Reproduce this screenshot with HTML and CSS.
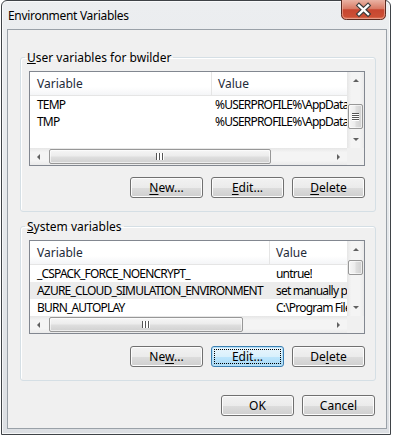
FILE: index.html
```html
<!DOCTYPE html>
<html lang="en">
<head>
    <meta charset="UTF-8">
    <title>Environment Variables</title>
    <link rel="stylesheet" href="styles.css">
</head>
<body>

<div class="window">
    <div class="titlebar">
        <span class="title">Environment Variables</span>
        <button class="close-btn" aria-label="Close">
            <svg width="45" height="20" viewBox="0 0 45 20">
                <defs>
                    <linearGradient id="closeBg" x1="0" y1="0" x2="0" y2="1">
                        <stop offset="0" stop-color="#eab3a4"/>
                        <stop offset="0.45" stop-color="#d87964"/>
                        <stop offset="0.5" stop-color="#c74630"/>
                        <stop offset="0.85" stop-color="#cc4f35"/>
                        <stop offset="1" stop-color="#e5876a"/>
                    </linearGradient>
                </defs>
                <path d="M0.5 0 V14.5 Q0.5 19.5 5.5 19.5 H39.5 Q44.5 19.5 44.5 14.5 V0" fill="url(#closeBg)" stroke="#5a2a20"/>
                <path d="M1.5 0 V14 Q1.5 18.5 6 18.5 H39 Q43.5 18.5 43.5 14 V0" fill="none" stroke="#f0b8a8" stroke-opacity="0.6"/>
                <path d="M18 5.5 L27 14 M27 5.5 L18 14" stroke="#3b3b3b" stroke-width="4.6" stroke-linecap="square"/>
                <path d="M18 5.5 L27 14 M27 5.5 L18 14" stroke="#ffffff" stroke-width="2.4" stroke-linecap="square"/>
            </svg>
        </button>
    </div>

    <div class="client">
        <!-- User variables -->
        <fieldset class="group">
            <legend><u>U</u>ser variables for bwilder</legend>
            <div class="list list-user">
                <div class="view">
                    <div class="lv-head">
                        <div class="cell c1">Variable</div>
                        <div class="cell c2">Value</div>
                    </div>
                    <div class="lv-row">
                        <div class="cell c1">TEMP</div>
                        <div class="cell c2">%USERPROFILE%\AppData\Local\Temp</div>
                    </div>
                    <div class="lv-row">
                        <div class="cell c1">TMP</div>
                        <div class="cell c2">%USERPROFILE%\AppData\Local\Temp</div>
                    </div>
                </div>
                <div class="vscroll">
                    <span class="arrow arrow-up"></span>
                    <div class="vtrack">
                        <div class="vthumb" style="margin-top:15px;height:25px"><span class="vgrip"></span></div>
                    </div>
                    <span class="arrow arrow-down"></span>
                </div>
                <div class="hscroll">
                    <span class="arrow arrow-left"></span>
                    <div class="htrack">
                        <div class="hthumb" style="width:222px"><span class="hgrip"></span></div>
                    </div>
                    <span class="arrow arrow-right"></span>
                </div>
                <div class="corner"></div>
            </div>
            <div class="btn-row">
                <button class="btn"><u>N</u>ew...</button>
                <button class="btn"><u>E</u>dit...</button>
                <button class="btn"><u>D</u>elete</button>
            </div>
        </fieldset>

        <!-- System variables -->
        <fieldset class="group group-system">
            <legend><u>S</u>ystem variables</legend>
            <div class="list list-system">
                <div class="view">
                    <div class="lv-head">
                        <div class="cell c1">Variable</div>
                        <div class="cell c2">Value</div>
                    </div>
                    <div class="lv-row">
                        <div class="cell c1">_CSPACK_FORCE_NOENCRYPT_</div>
                        <div class="cell c2">untrue!</div>
                    </div>
                    <div class="lv-row selected">
                        <div class="cell c1">AZURE_CLOUD_SIMULATION_ENVIRONMENT</div>
                        <div class="cell c2">set manually per machine</div>
                    </div>
                    <div class="lv-row">
                        <div class="cell c1">BURN_AUTOPLAY</div>
                        <div class="cell c2">C:\Program Files\Burn</div>
                    </div>
                </div>
                <div class="vscroll">
                    <span class="arrow arrow-up"></span>
                    <div class="vtrack">
                        <div class="vthumb" style="margin-top:2px;height:15px"></div>
                    </div>
                    <span class="arrow arrow-down"></span>
                </div>
                <div class="hscroll">
                    <span class="arrow arrow-left"></span>
                    <div class="htrack">
                        <div class="hthumb" style="width:194px"><span class="hgrip"></span></div>
                    </div>
                    <span class="arrow arrow-right"></span>
                </div>
                <div class="corner"></div>
            </div>
            <div class="btn-row">
                <button class="btn">Ne<u>w</u>...</button>
                <button class="btn btn-default">Ed<u>i</u>t...</button>
                <button class="btn">De<u>l</u>ete</button>
            </div>
        </fieldset>

        <div class="btn-row footer">
            <button class="btn">OK</button>
            <button class="btn">Cancel</button>
        </div>
    </div>
</div>

</body>
</html>
```

FILE: styles.css
```css
* {
    box-sizing: border-box;
}
body {
    margin: 0;
    background-color: #ffffff;
    font-family: "Noto Sans", "Segoe UI", sans-serif;
    font-size: 12px;
    color: #000;
}
.window {
    width: 390px;
    height: 435px;
    margin-left: 1px;
    border: 1px solid #3f4347;
    border-radius: 6px 6px 0 0;
    padding: 0 3px 5px 5px;
    background: linear-gradient(#eceef0, #e4e7ea 60%, #dcdfe3);
    box-shadow: inset 0 0 0 1px rgba(255, 255, 255, 0.7);
    display: flex;
    flex-direction: column;
}
.titlebar {
    height: 28px;
    display: flex;
    justify-content: space-between;
    align-items: flex-start;
}
.title {
    padding: 7px 0 0 1px;
    line-height: 15px;
    letter-spacing: -0.3px;
}
.close-btn {
    width: 45px;
    height: 20px;
    margin: -1px 1px 0 0;
    padding: 0;
    border: none;
    background: none;
    display: block;
}
.close-btn svg {
    display: block;
}
.client {
    flex: 1;
    background-color: #f0f0f0;
    border: 1px solid #9aa1a8;
    padding: 20px 0 0 12px;
}
.group {
    width: 356px;
    margin: 0;
    padding: 6px 10px 13px 8px;
    border: 1px solid #d5dfe5;
    border-radius: 3px;
    box-shadow: inset 1px 1px 0 #fff;
}
.group-system {
    margin-top: 7px;
}
legend {
    margin-left: -4px;
    padding: 0 2px;
    line-height: 15px;
}
.list {
    width: 336px;
    height: 95px;
    border: 1px solid #828790;
    background-color: #fff;
    display: grid;
    grid-template-columns: 1fr 17px;
    grid-template-rows: 1fr 17px;
}
.list-user {
    --c1: 182px;
    --pad2: 3px;
}
.list-system {
    height: 94px;
    --c1: 240px;
    --pad2: 6px;
}
.view {
    overflow: hidden;
    min-width: 0;
    min-height: 0;
}
.lv-head, .lv-row {
    display: flex;
    white-space: nowrap;
}
.lv-head {
    height: 24px;
    line-height: 23px;
    color: #1e2a38;
    border-bottom: 1px solid #e5e5e5;
    background: linear-gradient(#fff 65%, #f4f5f7);
}
.lv-row {
    height: 17px;
    line-height: 17px;
    letter-spacing: -0.8px;
}
.lv-row.selected {
    background-color: #ececec;
}
.cell {
    overflow: hidden;
}
.c1 {
    width: var(--c1);
    flex: none;
    padding-left: 7px;
}
.lv-head .c1 {
    border-right: 1px solid #e5e5e5;
}
.c2 {
    flex: none;
    padding-left: var(--pad2);
}
.lv-head .c2 {
    padding-left: 6px;
}
.vscroll {
    display: flex;
    flex-direction: column;
    background: linear-gradient(to right, #e6e6e6, #f4f4f4 25%, #f4f4f4 75%, #eaeaea);
}
.hscroll {
    display: flex;
    background: linear-gradient(#e6e6e6, #f4f4f4 25%, #f4f4f4 75%, #eaeaea);
}
.corner {
    background-color: #f0f0f0;
}
.arrow {
    flex: none;
    width: 17px;
    height: 17px;
    display: flex;
    align-items: center;
    justify-content: center;
}
.arrow::before {
    content: "";
    width: 0;
    height: 0;
    border: 3px solid transparent;
}
.arrow-up::before {
    border-bottom: 3px solid #606060;
    border-top-width: 0;
    border-left-width: 3.5px;
    border-right-width: 3.5px;
}
.arrow-down::before {
    border-top: 3px solid #606060;
    border-bottom-width: 0;
    border-left-width: 3.5px;
    border-right-width: 3.5px;
}
.arrow-left::before {
    border-right: 3px solid #606060;
    border-left-width: 0;
    border-top-width: 3.5px;
    border-bottom-width: 3.5px;
}
.arrow-right::before {
    border-left: 3px solid #606060;
    border-right-width: 0;
    border-top-width: 3.5px;
    border-bottom-width: 3.5px;
}
.vtrack {
    flex: 1;
    padding: 0 1px;
}
.htrack {
    flex: 1;
    padding: 1px 2px;
}
.vthumb, .hthumb {
    border: 1px solid #979797;
    border-radius: 2px;
    display: flex;
    align-items: center;
    justify-content: center;
    box-shadow: inset 0 0 0 1px rgba(255, 255, 255, 0.6);
}
.vthumb {
    width: 15px;
    background: linear-gradient(to right, #f6f6f6, #ececec 45%, #dedede 55%, #d0d0d0);
}
.hthumb {
    height: 15px;
    background: linear-gradient(#f6f6f6, #ececec 45%, #dedede 55%, #d0d0d0);
}
.vgrip {
    width: 7px;
    height: 8px;
    background: repeating-linear-gradient(#555 0 1px, #fff 1px 2px);
}
.hgrip {
    width: 8px;
    height: 7px;
    background: repeating-linear-gradient(to right, #555 0 1px, #fff 1px 3px);
}
.btn-row {
    display: flex;
    justify-content: flex-end;
    gap: 8px;
    margin-top: 11px;
}
.group-system .btn-row {
    margin-top: 12px;
}
.footer {
    width: 355px;
    margin-top: 14px;
}
.btn {
    width: 73px;
    height: 21px;
    padding: 0;
    font-family: inherit;
    font-size: 12px;
    line-height: 19px;
    color: #000;
    border: 1px solid #707070;
    border-radius: 3px;
    background: linear-gradient(#f2f2f2, #ebebeb 50%, #dddddd 50%, #cfcfcf);
    box-shadow: inset 0 0 0 1px #fcfcfc;
}
.btn u {
    text-underline-offset: 2px;
}
.btn-default {
    border-color: #3c7fb1;
    background: linear-gradient(#eaf6fd, #d9f0fc 50%, #bee6fd 50%, #a7d9f5);
    box-shadow: inset 0 0 0 1px #b6e0f8;
    outline: 1px dotted #000;
    outline-offset: -4px;
}
```
